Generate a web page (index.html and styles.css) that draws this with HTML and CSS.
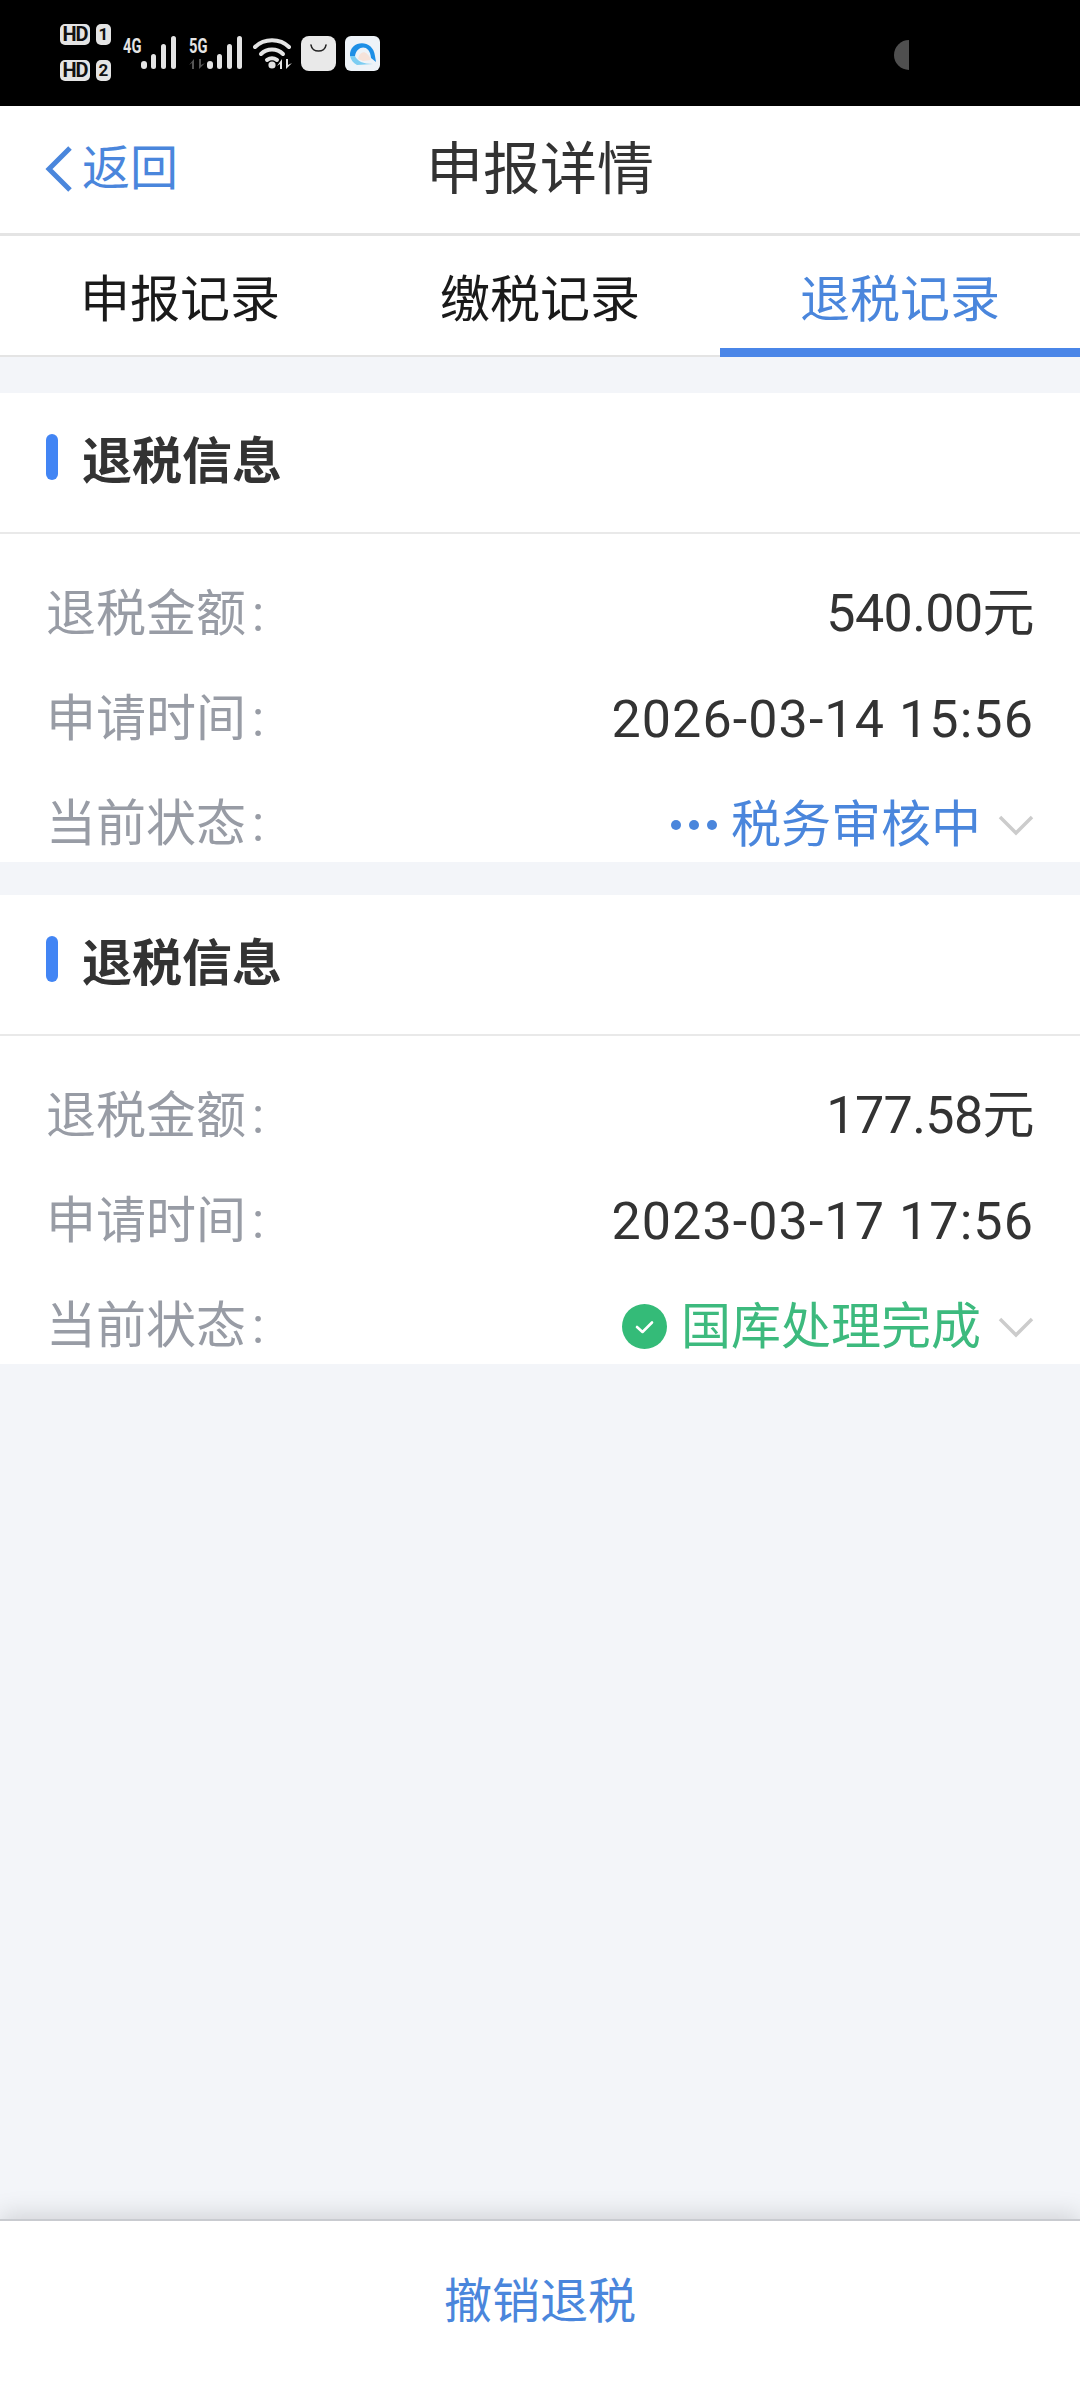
FILE: index.html
```html
<!DOCTYPE html>
<html lang="zh-CN">
<head>
  <meta charset="UTF-8" />
  <meta name="viewport" content="width=device-width, initial-scale=1" />
  <title>申报详情</title>
  <link rel="stylesheet" href="styles.css">
</head>
<body>

<div class="statusbar">
  <div class="sims">
    <div class="sim"><span class="hd">HD</span><span class="slot">1</span></div>
    <div class="sim"><span class="hd">HD</span><span class="slot">2</span></div>
  </div>
  <div class="net">
    <span class="gen"><b>4G</b></span>
    <svg class="signal" viewBox="0 0 35 33"><rect x="0" y="25" width="6" height="8" rx="3"/><rect x="10" y="18" width="5" height="15" rx="2.5"/><rect x="20" y="8" width="5" height="25" rx="2.5"/><rect x="30" y="0" width="5" height="33" rx="2.5"/></svg>
  </div>
  <div class="net net-5g">
    <span class="gen"><b>5G</b><svg class="updown" viewBox="0 0 17 10"><path d="M5 0 L5 10 L3 10 L3 4 L0 6 Z M10 0 L12 0 L12 6 L16 4 L10 10 Z"/></svg></span>
    <svg class="signal" viewBox="0 0 35 33"><rect x="0" y="25" width="6" height="8" rx="3"/><rect x="10" y="18" width="5" height="15" rx="2.5"/><rect x="20" y="8" width="5" height="25" rx="2.5"/><rect x="30" y="0" width="5" height="33" rx="2.5"/></svg>
  </div>
  <svg class="wifi" viewBox="0 0 40 33">
    <path d="M2 11 C11 2 27 2 36 11" />
    <path d="M8 18 C14 12 24 12 30 18" />
    <path d="M14 24 C17 22 21 22 24 24" />
    <circle cx="19" cy="29" r="3.6" class="fill" />
    <path class="fill" d="M29 23 L29 33 L27 33 L27 28 L24 30 Z M33 23 L35 23 L35 29 L39 27 L33 33 Z" />
  </svg>
  <svg class="app-icon" viewBox="0 0 35 35">
    <rect width="35" height="35" rx="8" fill="#e9e9e9"/>
    <path d="M10 9 C11 17 24 17 25 9" fill="none" stroke="#222" stroke-width="1.6" stroke-linecap="round"/>
  </svg>
  <svg class="app-icon" viewBox="0 0 35 35">
    <rect width="35" height="35" rx="6" fill="#eef3f8"/>
    <path d="M5 20 C4 4 28 2 30 20 L31 26 L26 22 C25 8 12 9 10 20 Z" fill="#1d8fe6"/>
    <path d="M10 20 C12 25 18 28 28 28 L12 29 C8 27 6 24 5 20 Z" fill="#7ccdf2"/>
    <path d="M13 23 C15 14 22 14 26 24 L18 25 Z" fill="#f6e3da"/>
  </svg>
  <div class="moon"></div>
</div>

<div class="navbar">
  <a class="back">
    <svg class="back-arrow" viewBox="0 0 28 48"><path d="M25 3 L4 24 L25 45" /></svg>
    <span>返回</span>
  </a>
  <div class="nav-title">申报详情</div>
</div>

<div class="tabs">
  <div class="tab">申报记录</div>
  <div class="tab">缴税记录</div>
  <div class="tab active">退税记录</div>
</div>

<div class="list">
  <section class="card">
    <div class="card-head"><i class="accent"></i><h3>退税信息</h3></div>
    <div class="row"><span class="label">退税金额<i class="colon">:</i></span><span class="value amount">540.00元</span></div>
    <div class="row"><span class="label">申请时间<i class="colon">:</i></span><span class="value">2026-03-14 15:56</span></div>
    <div class="row">
      <span class="label">当前状态<i class="colon">:</i></span>
      <span class="status pending">
        <span class="dots"><i></i><i></i><i></i></span>
        税务审核中
        <svg class="chevron" viewBox="0 0 36 22"><path d="M2 3 L18 19 L34 3" /></svg>
      </span>
    </div>
  </section>

  <section class="card">
    <div class="card-head"><i class="accent"></i><h3>退税信息</h3></div>
    <div class="row"><span class="label">退税金额<i class="colon">:</i></span><span class="value amount">177.58元</span></div>
    <div class="row"><span class="label">申请时间<i class="colon">:</i></span><span class="value">2023-03-17 17:56</span></div>
    <div class="row">
      <span class="label">当前状态<i class="colon">:</i></span>
      <span class="status done">
        <svg class="check" viewBox="0 0 45 45"><circle cx="22.5" cy="22.5" r="22.5" fill="#34bb78"/><path d="M15 23 L20.500 28 L30 18.500" fill="none" stroke="#fff" stroke-width="2.600" stroke-linecap="round" stroke-linejoin="round"/></svg>
        国库处理完成
        <svg class="chevron" viewBox="0 0 36 22"><path d="M2 3 L18 19 L34 3" /></svg>
      </span>
    </div>
  </section>
</div>

<div class="bottom-bar">撤销退税</div>

</body>
</html>
```

FILE: styles.css
```css
* { box-sizing: border-box; }
body { margin: 0; height: 100vh; display: flex; flex-direction: column; background: #f3f5f9; font-family: Roboto, "Noto Sans CJK SC", sans-serif; line-height: 64px; overflow: hidden; }

.statusbar { height: 106px; flex: none; background: #000; display: flex; align-items: flex-start; padding: 24px 0 0 60px; position: relative; }
.sims { display: flex; flex-direction: column; gap: 15px; width: 63px; }
.sim { display: flex; gap: 6px; height: 21px; }
.hd, .slot { background: #e4e4e4; color: #111; font-size: 20px; font-weight: 700; line-height: 21px; text-align: center; border-radius: 5px; }
.hd { width: 30px; letter-spacing: -1px; }
.slot { width: 15px; font-size: 17px; }
.net { display: flex; align-items: flex-start; margin: 12px 0 0 0; }
.net-5g { margin-left: 13px; }
.gen { display: block; width: 18px; color: #e4e4e4; line-height: 18px; margin-top: 1px; }
.gen b { display: block; font-size: 21px; font-weight: 700; transform: scaleX(0.7); transform-origin: left center; }
.updown { display: block; width: 17px; height: 10px; margin-top: 4px; fill: #555; }
.signal { width: 35px; height: 33px; fill: #e4e4e4; }
.wifi { width: 40px; height: 33px; margin: 12px 8px 0 11px; fill: none; stroke: #e4e4e4; stroke-width: 4; stroke-linecap: round; }
.wifi .fill { fill: #e4e4e4; stroke: none; }
.app-icon { width: 35px; height: 35px; margin: 12px 9px 0 0; }
.moon { position: absolute; left: 894px; top: 40px; width: 15px; height: 30px; background: #4f4f4f; border-radius: 15px 0 0 15px / 15px 0 0 15px; }

.navbar { height: 130px; flex: none; background: #fff; border-bottom: 3px solid #e4e4e4; display: flex; align-items: center; justify-content: center; position: relative; }
.back { position: absolute; left: 45px; top: 38px; display: flex; align-items: center; gap: 9px; color: #4a86dc; font-size: 48px; line-height: 50px; }
.back-arrow { width: 28px; height: 48px; fill: none; stroke: #4a86dc; stroke-width: 5; }
.nav-title { color: #333; font-size: 57px; }

.tabs { height: 121px; flex: none; background: #fff; border-bottom: 2px solid #e4e4e4; display: grid; grid-template-columns: 1fr 1fr 1fr; }
.tab { color: #1a1a1a; font-size: 50px; display: flex; align-items: center; justify-content: center; height: 121px; padding-top: 6px; }
.tab.active { color: #4a86dc; border-bottom: 9px solid #4a86e8; padding-top: 15px; }

.list { flex: 1; padding-top: 36px; display: flex; flex-direction: column; gap: 33px; }
.card { height: 469px; background: #fff; overflow: hidden; }
.card-head { height: 141px; border-bottom: 2px solid #e9e9e9; display: flex; align-items: center; gap: 24px; padding: 0 0 12px 46px; margin-bottom: 27px; }
.accent { width: 12px; height: 46px; border-radius: 6px; background: #4285f4; }
.card-head h3 { margin: 0; color: #333; font-size: 50px; font-weight: 700; padding-top: 11px; }
.row { height: 105px; display: flex; align-items: center; justify-content: space-between; padding: 0 46px; }
.label { color: #989ca5; font-size: 50px; }
.colon { font-style: normal; margin-left: 6px; }
.value { color: #333; font-size: 52px; letter-spacing: 1.100px; padding-top: 3px; }
.amount { letter-spacing: -0.600px; padding-top: 0; }
.status { display: flex; align-items: center; font-size: 50px; padding-top: 2px; }
.pending { color: #4a86dc; }
.done { color: #3dba7e; }
.dots { display: flex; gap: 8px; margin-right: 14px; }
.dots i { width: 10px; height: 10px; border-radius: 50%; background: #4a86dc; }
.check { width: 45px; height: 45px; margin-right: 14px; }
.chevron { width: 36px; height: 22px; margin-left: 17px; fill: none; stroke: #cccccc; stroke-width: 3.500; }

.bottom-bar { height: 169px; flex: none; background: #fff; border-top: 2px solid #c9cbd0; box-shadow: 0 -6px 22px rgba(0,0,0,0.13); color: #4a86dc; font-size: 48px; display: flex; align-items: center; justify-content: center; padding-bottom: 6px; position: relative; }
```
